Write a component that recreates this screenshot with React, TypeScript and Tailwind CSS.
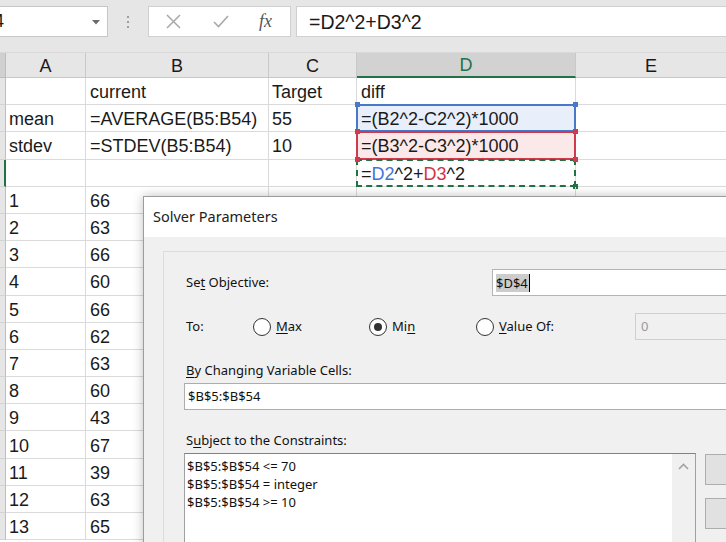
import React from "react";

type Cell = { text?: React.ReactNode; tone?: "blue" | "red" | "green" };

interface RowData {
    a?: string;
    b?: string;
    c?: string;
    d?: Cell;
    active?: boolean;
}

const rows: RowData[] = [
    { b: "current", c: "Target", d: { text: "diff" } },
    { a: "mean", b: "=AVERAGE(B5:B54)", c: "55", d: { text: "=(B2^2-C2^2)*1000", tone: "blue" } },
    { a: "stdev", b: "=STDEV(B5:B54)", c: "10", d: { text: "=(B3^2-C3^2)*1000", tone: "red" } },
    {
        active: true,
        d: {
            tone: "green",
            text: (
                <>
                    =<span className="text-[#3f74d8]">D2</span>^2+<span className="text-[#d5323f]">D3</span>^2
                </>
            ),
        },
    },
    ...["66", "63", "66", "60", "66", "62", "63", "60", "43", "67", "39", "63", "65"].map((v, i) => ({
        a: String(i + 1),
        b: v,
    })),
];

function Corner({ className }: { className: string }) {
    return <span className={"absolute w-[5px] h-[5px] " + className} />;
}

function DCell({ cell }: { cell?: Cell }) {
    const tone = cell?.tone;
    return (
        <div
            className={
                "relative w-[219px] h-full shrink-0 border-r border-b border-[#dadada] px-[4px] pt-[3px] flex items-center " +
                (tone === "blue" ? "bg-[#e9effa]" : tone === "red" ? "bg-[#fbe9e9]" : "")
            }
        >
            {cell?.text}
            {tone === "blue" && (
                <>
                    <span className="absolute left-[-1px] right-[-1px] top-[-1px] bottom-[-1px] border-2 border-[#4a78c8]" />
                    <Corner className="bg-[#4a78c8] left-[-2px] top-[-3px]" />
                    <Corner className="bg-[#4a78c8] right-[-3px] top-[-3px]" />
                </>
            )}
            {tone === "red" && (
                <>
                    <span className="absolute left-[-1px] right-[-1px] top-[-1px] bottom-[-1px] border-2 border-[#d03a4a]" />
                    <Corner className="bg-[#d03a4a] left-[-2px] top-[-3px]" />
                    <Corner className="bg-[#d03a4a] right-[-3px] top-[-3px]" />
                </>
            )}
            {tone === "green" && (
                <>
                    <span className="absolute left-[-1px] right-[-1px] top-[-1px] bottom-[-1px] border-2 border-dashed border-[#217346]" />
                    <Corner className="bg-[#d03a4a] left-[-2px] top-[-3px]" />
                    <Corner className="bg-[#d03a4a] right-[-3px] top-[-3px]" />
                    <Corner className="bg-[#217346] right-[-3px] bottom-[-3px]" />
                </>
            )}
        </div>
    );
}

function SheetRow({ row }: { row: RowData }) {
    return (
        <div className="flex h-[27.2px] shrink-0">
            <div
                className={
                    "w-[6px] shrink-0 bg-[#e6e6e6] border-b border-[#d4d4d4] border-r " +
                    (row.active ? "border-r-2 border-r-[#217346]" : "border-r-[#bdbdbd]")
                }
            />
            <div className="w-[80px] shrink-0 border-r border-b border-[#dadada] px-[3px] pt-[3px] flex items-center">{row.a}</div>
            <div className="w-[183px] shrink-0 border-r border-b border-[#dadada] px-[4px] pt-[3px] flex items-center whitespace-nowrap">
                {row.b}
            </div>
            <div className="w-[88px] shrink-0 border-r border-b border-[#dadada] px-[3px] pt-[3px] flex items-center">{row.c}</div>
            <DCell cell={row.d} />
            <div className="w-[150px] shrink-0 border-b border-[#dadada]" />
        </div>
    );
}

function Radio({ u, rest, checked, pre }: { pre?: string; u: string; rest: string; checked?: boolean }) {
    return (
        <div className="flex items-center gap-[5px]">
            <span className="w-[18px] h-[18px] rounded-full border border-[#333] bg-white flex items-center justify-center">
                {checked && <span className="w-[8px] h-[8px] rounded-full bg-[#333]" />}
            </span>
            <span>
                {pre}
                <span className="underline underline-offset-2">{u}</span>
                {rest}
            </span>
        </div>
    );
}

function SolverDialog() {
    return (
        <div className="absolute left-[143px] top-[196px] w-[700px] h-[400px] border border-[#9c9c9c] bg-[#f0f0f0] shadow-[0_0_10px_rgba(0,0,0,0.25)] font-['Noto_Sans',sans-serif] text-[13px] text-[#111]">
            {/* Title bar */}
            <div className="h-[40px] bg-white flex items-center pl-[9px] text-[14.5px] text-[#222]">Solver Parameters</div>

            {/* Body */}
            <div className="pl-[19px] pt-[14px]">
                <div className="border-l border-t border-[#dcdcdc] h-[360px] pl-[20px] pt-[17px] flex flex-col">
                    <div className="flex items-center h-[27px]">
                        <span className="w-[308px] pl-[2px]">
                            Se<span className="underline underline-offset-2">t</span> Objective:
                        </span>
                        <div className="flex-1 h-[27px] bg-white border border-[#b4b4b4] flex items-center pl-[3px]">
                            <span className="bg-[#cccccc] text-[#111] leading-[18px] pr-[1px] border-r border-black">$D$4</span>
                        </div>
                    </div>

                    <div className="flex items-center h-[27px] mt-[17px]">
                        <span className="w-[69px] pl-[2px]">To:</span>
                        <div className="w-[116px]">
                            <Radio u="M" rest="ax" />
                        </div>
                        <div className="w-[107px]">
                            <Radio pre="Mi" u="n" rest="" checked />
                        </div>
                        <div className="w-[159px]">
                            <Radio u="V" rest="alue Of:" />
                        </div>
                        <div className="flex-1 h-[27px] bg-[#f0f0f0] border border-[#cfcfcf] flex items-center pl-[5px] text-[#9a9a9a]">
                            0
                        </div>
                    </div>

                    <div className="mt-[21px] leading-[18px] pl-[2px]">
                        <span className="underline underline-offset-2">B</span>y Changing Variable Cells:
                    </div>
                    <div className="mt-[4px] h-[27px] bg-white border border-[#adadad] flex items-center pl-[3px]">$B$5:$B$54</div>

                    <div className="mt-[21px] leading-[18px] pl-[2px]">
                        S<span className="underline underline-offset-2">u</span>bject to the Constraints:
                    </div>
                    <div className="mt-[4px] flex gap-[9px]">
                        <div className="w-[512px] h-[120px] bg-white border border-[#a0a0a0] border-t-[#828282] flex">
                            <div className="flex-1 pl-[2px] pt-[3px] leading-[18px]">
                                <div>$B$5:$B$54 &lt;= 70</div>
                                <div>$B$5:$B$54 = integer</div>
                                <div>$B$5:$B$54 &gt;= 10</div>
                            </div>
                            <div className="w-[23px] bg-[#f0f0f0] flex justify-center pt-[9px]">
                                <svg width="11" height="7" viewBox="0 0 11 7">
                                    <path d="M1 6 L5.5 1.5 L10 6" fill="none" stroke="#a3a3a3" strokeWidth="1.6" />
                                </svg>
                            </div>
                        </div>
                        <div className="flex flex-col gap-[13px] pt-[1px]">
                            <div className="w-[80px] h-[31px] bg-[#e1e1e1] border border-[#adadad]" />
                            <div className="w-[80px] h-[31px] bg-[#e1e1e1] border border-[#adadad]" />
                        </div>
                    </div>
                </div>
            </div>
        </div>
    );
}

export default function App() {
    return (
        <div className="relative w-[726px] h-[542px] overflow-hidden bg-white font-['Liberation_Sans',Arial,sans-serif] text-[18px] text-[#1a1a1a]">
            {/* Formula bar */}
            <div className="h-[52px] bg-[#e6e6e6] flex items-start pt-[6px]">
                <div className="w-[108px] h-[31px] bg-white border border-[#c6c6c6] border-l-0 flex items-center relative overflow-hidden">
                    <span className="ml-[-19px]">D4</span>
                    <svg className="absolute left-[92px] top-[13px]" width="8" height="5" viewBox="0 0 8 5">
                        <path d="M0 0 L8 0 L4 4.5 Z" fill="#6b6b6b" />
                    </svg>
                </div>
                <div className="w-[40px] h-[31px] flex flex-col items-center justify-center gap-[3px]">
                    <span className="w-[2px] h-[2px] bg-[#9e9e9e]" />
                    <span className="w-[2px] h-[2px] bg-[#9e9e9e]" />
                    <span className="w-[2px] h-[2px] bg-[#9e9e9e]" />
                </div>
                <div className="w-[143px] h-[31px] bg-white border border-[#d0d0d0] flex items-center">
                    <svg className="ml-[17px]" width="15" height="15" viewBox="0 0 15 15">
                        <path d="M1 1 L14 14 M14 1 L1 14" stroke="#a8a8a8" strokeWidth="1.5" />
                    </svg>
                    <svg className="ml-[32px]" width="16" height="13" viewBox="0 0 16 13">
                        <path d="M1 7 L5.5 11.5 L15 1" fill="none" stroke="#a8a8a8" strokeWidth="1.6" />
                    </svg>
                    <span className="ml-[30px] font-['Liberation_Serif',serif] italic text-[18px] text-[#555]">fx</span>
                </div>
                <div className="ml-[5px] flex-1 h-[31px] bg-white border border-[#d0d0d0] border-r-0 flex items-center pl-[12px] pt-[2px] text-[19.5px]">
                    =D2^2+D3^2
                </div>
            </div>

            {/* Column headers */}
            <div className="flex h-[26px] bg-[#e6e6e6] border-t border-[#d9d9d9]">
                <div className="w-[6px] shrink-0 bg-[#d0d0d0] border-r border-[#bdbdbd] border-b border-b-[#bdbdbd]" />
                <div className="w-[80px] shrink-0 border-r border-b border-[#c8c8c8] pt-[2px] flex items-center justify-center">A</div>
                <div className="w-[183px] shrink-0 border-r border-b border-[#c8c8c8] pt-[2px] flex items-center justify-center">B</div>
                <div className="w-[88px] shrink-0 border-r border-b border-[#c8c8c8] pt-[2px] flex items-center justify-center">C</div>
                <div className="w-[219px] shrink-0 bg-[#d2d2d2] border-r border-[#c8c8c8] border-b-2 border-b-[#217346] text-[#217346] pt-[2px] flex items-center justify-center">
                    D
                </div>
                <div className="w-[150px] shrink-0 border-b border-[#c8c8c8] pt-[2px] flex items-center justify-center">E</div>
            </div>

            {/* Grid */}
            <div className="flex flex-col">
                {rows.map((r, i) => (
                    <SheetRow key={i} row={r} />
                ))}
            </div>

            <SolverDialog />
        </div>
    );
}
